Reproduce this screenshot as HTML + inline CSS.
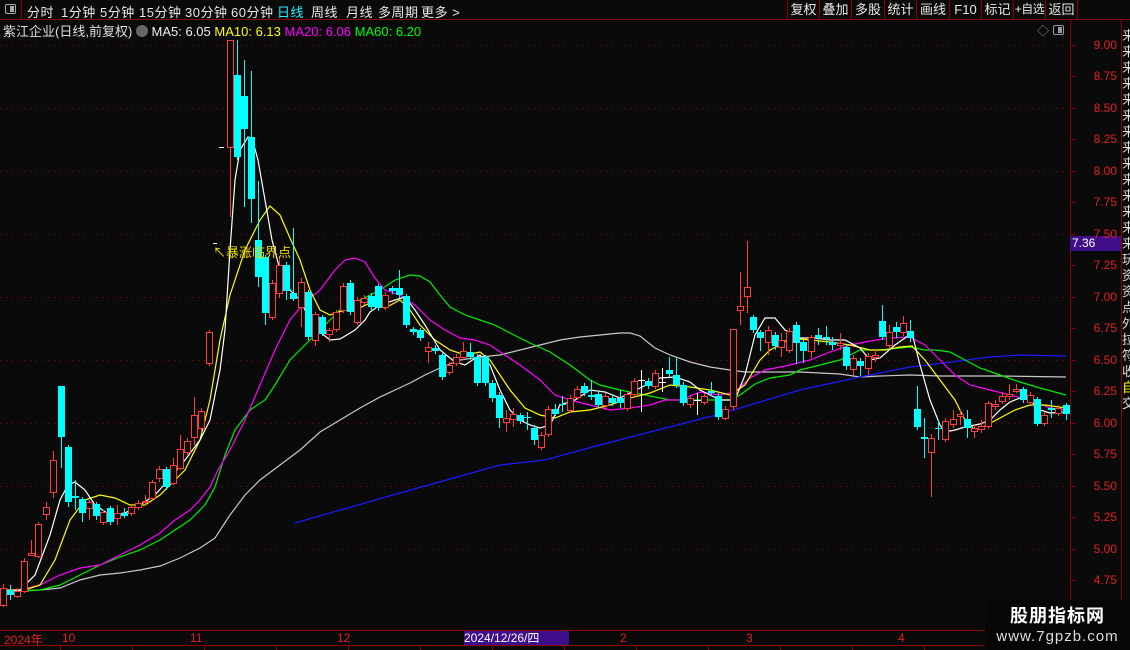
<!DOCTYPE html>
<html><head><meta charset="utf-8">
<style>
*{margin:0;padding:0;box-sizing:border-box}
body{width:1130px;height:650px;background:#0a0a0a;overflow:hidden;font-family:"Liberation Sans","Noto Sans CJK SC",sans-serif;color:#ddd;position:relative}
.top{position:absolute;left:0;top:0;width:1130px;height:20px;border-bottom:1px solid #8b0000}
.top span{position:absolute;top:2px;font-size:13px;color:#e8e8e8;white-space:nowrap;letter-spacing:0.5px}
.rb{position:absolute;top:0;height:19px;border-left:1px solid #8b0000;font-size:13px;color:#e8e8e8;text-align:center;line-height:19px;white-space:nowrap;overflow:hidden}
.ab{position:absolute;font-size:12px;color:#e02020;right:13px}
svg{position:absolute;left:0;top:0}
</style></head><body>
<div class="top">
<div style="position:absolute;left:0;top:0;width:22px;height:19px;border-right:1px solid #8b0000"><div style="position:absolute;left:5px;top:4px;width:11px;height:10px;border:1px solid #aaa;border-radius:2px"><div style="position:absolute;right:1px;top:1px;width:4px;height:6px;background:#aaa"></div></div></div>
<span style="left:27px">分时</span><span style="left:61px">1分钟</span><span style="left:100px">5分钟</span><span style="left:139px">15分钟</span><span style="left:185px">30分钟</span><span style="left:231px">60分钟</span><span style="left:277px;color:#2ef">日线</span><span style="left:311px">周线</span><span style="left:346px">月线</span><span style="left:378px">多周期</span><span style="left:421px">更多 &gt;</span>
<div class="rb" style="left:787px;width:32px">复权</div><div class="rb" style="left:819px;width:32px">叠加</div><div class="rb" style="left:851px;width:33px">多股</div><div class="rb" style="left:884px;width:32px">统计</div><div class="rb" style="left:916px;width:33px">画线</div><div class="rb" style="left:949px;width:32px">F10</div><div class="rb" style="left:981px;width:32px">标记</div><div class="rb" style="left:1013px;width:32px;font-size:12px;letter-spacing:-0.5px">+自选</div><div class="rb" style="left:1045px;width:33px;border-right:1px solid #8b0000">返回</div>
</div>
<div style="position:absolute;left:3px;top:21px;font-size:13px;white-space:nowrap">紫江企业(日线,前复权) <span style="display:inline-block;width:12px;height:12px;border-radius:6px;background:#666;vertical-align:-1px"></span> <span style="color:#eee">MA5: 6.05</span> <span style="color:#ff0">MA10: 6.13</span> <span style="color:#f0f">MA20: 6.06</span> <span style="color:#0f0">MA60: 6.20</span></div>
<div style="position:absolute;left:1037px;top:22px;font-size:12px;color:#888">◇</div>
<div style="position:absolute;left:1053px;top:25px;width:11px;height:10px;border:1px solid #999;border-radius:2px"><div style="position:absolute;right:1px;top:1px;width:4px;height:6px;background:#999"></div></div>
<svg id="c" width="1130" height="650"></svg>
<div style="position:absolute;left:1070px;top:236px;width:51px;height:15px;background:#3d0d8a;color:#fff;font-size:12px;line-height:15px;padding-left:2px">7.36</div>
<div id="ax"></div>
<div style="position:absolute;left:1122px;top:28px;width:8px;height:430px;overflow:hidden;font-size:13px;line-height:16px;color:#ddd">来<br>来<br>来<br>来<br>来<br>来<br>来<br>来<br>来<br>来<br>来<br>来<br>来<br>来<br>玩<br>资<br>资<br>点<br>外<br>拉<br>符<br>收<br><span style="color:#ff0">自</span><br>交</div>
<div style="position:absolute;left:0;top:630px;width:1070px;height:1px;background:#8b0000"></div>
<div style="position:absolute;left:0;top:645px;width:1130px;height:1px;background:#8b0000"></div>
<div style="position:absolute;left:4px;top:631px;font-size:12px;color:#e02020">2024年</div>
<div style="position:absolute;left:62px;top:631px;font-size:12px;color:#e02020">10</div>
<div style="position:absolute;left:190px;top:631px;font-size:12px;color:#e02020">11</div>
<div style="position:absolute;left:337px;top:631px;font-size:12px;color:#e02020">12</div>
<div style="position:absolute;left:464px;top:631px;width:105px;height:14px;background:#3d0d8a;font-size:12px;color:#fff;line-height:14px">2024/12/26/四</div>
<div style="position:absolute;left:620px;top:631px;font-size:12px;color:#e02020">2</div>
<div style="position:absolute;left:746px;top:631px;font-size:12px;color:#e02020">3</div>
<div style="position:absolute;left:898px;top:631px;font-size:12px;color:#e02020">4</div>
<div style="position:absolute;left:985px;top:600px;width:145px;height:50px;background:#060606;text-align:center">
<div style="font-size:18px;font-weight:bold;color:#fff;margin-top:2px;letter-spacing:1px">股朋指标网</div>
<div style="font-size:15px;color:#ddd;margin-top:0px;letter-spacing:1px">www.7gpzb.com</div></div>
<script>
var s='';
function Y(p){return 45+(9-p)*125.9}
for(var p=9;p>=4.74;p-=0.5){var y=Math.round(Y(p))+.5;s+='<line x1="0" x2="1068" y1="'+y+'" y2="'+y+'" stroke="#7a1010" stroke-dasharray="1,5"/>';}
s+='<line x1="1070.5" x2="1070.5" y1="20" y2="630" stroke="#8b0000"/><line x1="1121.5" x2="1121.5" y1="20" y2="650" stroke="#8b0000"/>';
for(var x=60;x<1070;x+=72){s+='<line x1="'+x+'.5" x2="'+x+'.5" y1="645" y2="650" stroke="#8b0000"/>';}
var ax='';
for(var i=0;i<=17;i++){var p=9-i*0.25,y=Y(p);ax+='<div class="ab" style="top:'+(y-7)+'px">'+p.toFixed(2)+'</div>';s+='<line x1="1071" x2="1076" y1="'+Math.round(y)+'.5" y2="'+Math.round(y)+'.5" stroke="#8b0000"/>';}
document.getElementById('ax').innerHTML=ax;
function pl(pts,c){s+='<polyline fill="none" stroke="'+c+'" stroke-width="1.2" points="'+pts+'"/>';}
pl("3,592 40,590 60,588 80,580 100,575 120,573 140,570 160,566 180,558 200,548 215,538 230,515 245,495 260,480 280,465 300,450 320,432 340,420 360,408 380,397 395,390 410,383 425,375 440,368 460,360 480,357 500,355 520,350 540,345 560,340 580,337 600,335 620,333 630,333 640,336 655,348 670,355 690,362 710,367 730,370 745,372 800,372 840,374 860,377 880,376 910,375 940,376 1000,376 1066,377","#c8c8c8");
pl("295,523 400,493 500,465 545,460 600,445 650,432 720,414 800,390 860,377 910,367 920,366 990,357 1020,355 1066,356","#1a1aff");
pl("3,592 40,590 60,585 80,575 100,565 120,557 140,550 160,540 175,530 190,520 205,505 215,487 225,455 235,430 250,410 265,400 275,385 290,360 305,345 320,330 340,310 360,300 380,290 395,280 410,275 420,276 430,282 440,295 450,307 465,315 480,320 495,325 510,333 530,343 550,352 570,365 590,380 600,385 620,390 645,395 670,400 730,400 740,395 755,384 770,378 790,375 800,370 820,365 840,360 860,350 880,350 910,347 925,350 935,350 950,352 965,360 980,368 1000,375 1020,382 1040,388 1066,395","#00ee00");
pl("3,590 20,590 40,585 60,575 80,568 100,565 120,555 140,545 160,533 175,520 190,510 200,500 210,487 218,470 230,450 245,420 260,385 275,350 290,320 305,302 320,290 335,270 345,260 355,258 365,262 375,278 385,290 400,295 415,305 430,320 445,330 460,338 475,340 490,345 505,355 520,365 540,380 555,395 570,400 590,405 610,410 630,408 650,405 665,400 680,400 700,392 720,395 735,392 750,378 765,370 790,365 810,360 830,352 850,345 870,341 890,338 910,337 925,345 940,360 955,375 970,385 990,390 1010,395 1030,400 1050,408 1066,410","#ff00ff");
pl("3,590 25,590 40,585 55,560 70,520 85,500 100,495 115,498 130,505 145,505 160,495 175,480 185,470 200,440 210,400 220,340 230,295 245,250 260,220 270,206 280,215 290,238 300,260 310,290 320,310 330,315 345,310 355,310 370,303 385,308 400,300 410,310 420,325 435,340 450,350 465,355 480,352 490,360 500,375 510,390 525,408 540,415 555,418 570,412 590,410 610,405 630,398 650,393 670,385 690,387 710,390 730,395 745,385 760,360 770,350 780,345 790,338 810,340 830,342 850,345 870,350 885,350 900,347 912,346 925,360 940,380 955,400 965,420 975,430 985,426 1000,418 1015,410 1030,405 1045,405 1066,408","#ffff00");
pl("3,592 20,590 35,575 50,535 60,500 68,485 75,482 85,490 95,505 110,515 125,513 140,505 155,495 170,478 185,460 200,440 210,420 220,370 225,330 230,250 235,180 240,150 248,137 252,138 258,160 265,200 272,240 280,270 290,290 300,300 310,320 320,332 330,340 340,339 355,330 365,320 370,312 380,305 395,300 405,297 415,310 425,325 440,350 455,362 465,365 480,355 490,365 500,390 510,410 520,420 530,425 540,428 550,425 560,405 575,400 590,390 605,392 620,398 640,388 660,378 675,377 690,382 700,390 720,400 735,400 745,375 755,335 765,318 775,318 785,330 800,338 815,338 830,340 845,340 860,348 870,360 880,358 895,345 905,338 912,333 920,365 930,400 940,425 945,432 955,430 965,427 980,424 990,420 1000,410 1010,402 1020,398 1030,400 1040,410 1050,413 1066,412","#ffffff");
var R='r',C='c',W='w';
var d=[[3,588,605,584,607,R],[10,590,595,585,600,C],[17,591,596,588,598,R],[24,561,591,558,593,R],[31,553,555,540,556,R],[38,524,556,522,558,R],[46,507,514,502,520,R],[53,460,492,451,498,R],[61,386,437,386,468,C],[68,447,502,445,507,C],[75,496,498,480,510,C],[82,499,513,497,522,C],[89,502,508,500,520,R],[96,504,516,502,520,C],[103,512,522,510,525,R],[110,508,522,506,525,C],[117,513,518,505,525,R],[124,513,516,508,518,C],[131,507,513,505,516,R],[138,503,507,500,510,R],[145,501,502,495,505,R],[152,482,498,480,500,R],[159,469,478,466,482,R],[166,469,487,467,490,C],[173,465,483,458,485,R],[180,449,468,435,470,R],[187,441,452,438,455,R],[194,415,437,397,445,R],[201,411,428,408,432,R],[209,332,363,330,366,R],[230,40,147,40,217,R],[237,75,157,40,160,C],[244,96,129,60,207,C],[251,137,199,71,223,C],[258,240,277,181,287,C],[265,257,313,255,325,C],[272,283,317,280,320,R],[279,265,293,256,298,R],[286,265,291,262,300,C],[293,293,299,228,301,C],[301,282,307,278,327,R],[308,292,337,290,340,C],[315,314,340,312,346,R],[322,317,334,315,336,C],[329,330,334,328,342,R],[336,312,329,310,332,R],[343,286,310,283,313,R],[350,283,312,280,315,C],[357,300,322,297,325,R],[364,298,302,295,305,R],[371,296,307,293,310,C],[378,286,308,284,311,C],[385,295,307,292,310,R],[392,288,291,286,294,C],[399,288,295,270,298,C],[406,296,325,294,328,C],[413,329,332,327,335,C],[420,330,338,328,341,C],[428,347,351,342,363,R],[435,348,351,345,354,C],[442,355,377,353,380,C],[449,365,372,362,375,R],[456,357,363,354,366,R],[463,351,357,342,360,R],[470,352,357,343,360,C],[477,357,383,354,386,C],[485,357,383,355,386,C],[492,383,398,380,402,C],[499,395,418,392,428,C],[506,418,422,410,432,R],[513,414,419,408,427,R],[520,415,421,413,424,C],[527,417,418,412,430,C],[534,428,440,425,445,C],[541,435,447,432,450,R],[548,409,434,406,437,R],[555,409,414,404,416,C],[562,404,405,396,412,C],[570,398,410,395,413,R],[577,389,397,386,400,R],[584,386,393,383,396,C],[591,395,397,380,400,C],[598,394,405,391,408,C],[605,396,405,393,410,R],[612,398,403,395,406,C],[620,398,403,390,408,C],[627,394,408,392,411,R],[634,381,394,378,397,R],[641,380,381,370,412,W],[648,381,386,378,389,C],[655,373,386,370,389,R],[662,382,383,368,392,W],[669,370,374,357,377,C],[676,375,385,357,388,C],[683,385,403,382,406,C],[690,398,404,395,408,R],[697,400,401,393,415,W],[704,396,402,393,405,R],[711,391,393,382,396,C],[718,396,417,393,420,C],[725,409,418,406,420,R],[733,329,406,329,410,R],[740,306,310,272,325,R],[747,287,296,241,313,R],[753,317,330,315,333,C],[760,332,338,330,351,C],[768,330,342,326,355,R],[775,335,346,332,350,C],[781,340,347,333,357,R],[789,331,350,328,353,R],[796,325,343,322,364,C],[803,342,351,340,363,C],[811,337,351,335,358,R],[818,335,338,328,345,C],[826,337,339,326,345,C],[832,342,345,337,350,C],[840,343,345,333,350,R],[846,347,366,344,370,C],[853,358,369,355,375,R],[860,361,366,358,376,C],[868,356,368,353,375,R],[875,355,357,350,362,R],[882,321,337,305,340,C],[889,332,345,325,348,R],[896,327,332,322,338,C],[903,323,332,316,336,R],[910,331,338,320,342,C],[917,409,427,386,430,C],[924,437,439,418,458,C],[931,438,452,434,497,R],[938,428,429,420,440,C],[945,421,439,418,442,R],[953,419,424,410,428,R],[960,414,416,410,425,R],[967,419,428,410,438,C],[974,428,431,425,438,R],[981,426,429,420,433,R],[988,403,426,401,429,R],[995,404,406,400,410,R],[1002,396,401,392,404,R],[1009,394,396,384,400,R],[1016,389,391,384,393,R],[1023,389,400,387,403,C],[1030,395,402,392,405,R],[1037,399,424,397,426,C],[1044,415,423,412,426,R],[1051,408,410,400,418,C],[1058,408,413,405,416,R],[1066,405,414,403,420,C]];
d.forEach(function(k){var x=k[0],t=k[1],b=k[2],col=k[5]==R?'#ff3b3b':(k[5]==C?'#00ffff':'#ffffff');
s+='<line x1="'+x+'.5" x2="'+x+'.5" y1="'+k[3]+'" y2="'+k[4]+'" stroke="'+col+'"/>';
var h=Math.max(b-t,1);
if(k[5]==R)s+='<rect x="'+(x-2.5)+'" y="'+(t+.5)+'" width="6" height="'+h+'" fill="#0a0a0a" stroke="'+col+'"/>';
else s+='<rect x="'+(x-3)+'" y="'+t+'" width="7" height="'+h+'" fill="'+col+'"/>';});
s+='<line x1="219" x2="224" y1="147.5" y2="147.5" stroke="#fff"/><line x1="213" x2="217" y1="243.5" y2="243.5" stroke="#fff"/>';
s+='<text x="213" y="257" fill="#e8d800" font-size="13" font-family="Liberation Sans,Noto Sans CJK SC,sans-serif">↖暴涨临界点</text>';
document.getElementById('c').innerHTML=s;
</script>
</body></html>
